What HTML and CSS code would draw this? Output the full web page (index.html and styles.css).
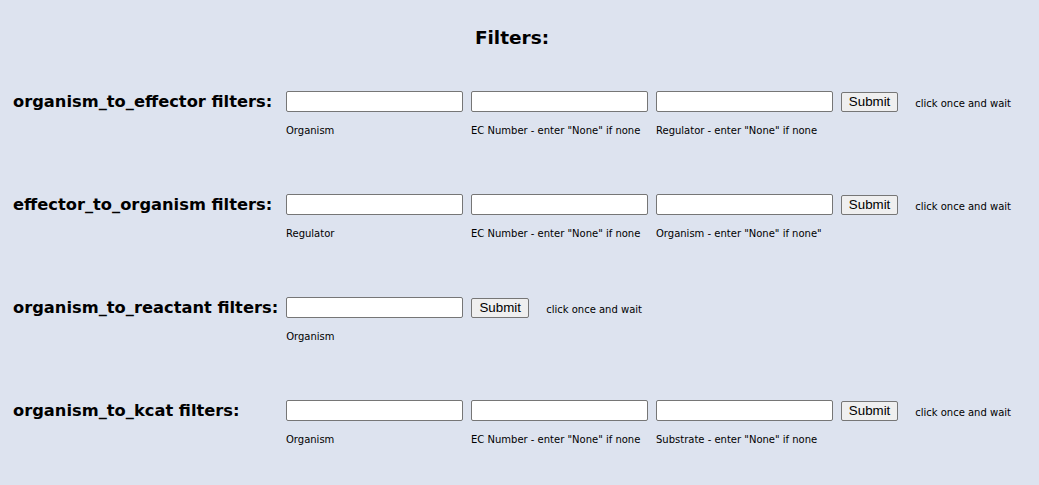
FILE: index.html
```html
<!DOCTYPE html>
<html>
<head>
<meta charset="utf-8">
<link rel="stylesheet" href="styles.css">
</head>
<body>
<div class="page">
  <h2 class="title">Filters:</h2>

  <form class="section">
    <h3 class="name">organism_to_effector filters:</h3>
    <label class="field"><input class="input" type="text"><span class="caption">Organism</span></label>
    <label class="field"><input class="input" type="text"><span class="caption">EC Number - enter "None" if none</span></label>
    <label class="field"><input class="input" type="text"><span class="caption">Regulator - enter "None" if none</span></label>
    <button class="submit" type="button">Submit</button>
    <span class="hint">click once and wait</span>
  </form>

  <form class="section">
    <h3 class="name">effector_to_organism filters:</h3>
    <label class="field"><input class="input" type="text"><span class="caption">Regulator</span></label>
    <label class="field"><input class="input" type="text"><span class="caption">EC Number - enter "None" if none</span></label>
    <label class="field"><input class="input" type="text"><span class="caption">Organism - enter "None" if none"</span></label>
    <button class="submit" type="button">Submit</button>
    <span class="hint">click once and wait</span>
  </form>

  <form class="section">
    <h3 class="name">organism_to_reactant filters:</h3>
    <label class="field"><input class="input" type="text"><span class="caption">Organism</span></label>
    <button class="submit" type="button">Submit</button>
    <span class="hint">click once and wait</span>
  </form>

  <form class="section">
    <h3 class="name">organism_to_kcat filters:</h3>
    <label class="field"><input class="input" type="text"><span class="caption">Organism</span></label>
    <label class="field"><input class="input" type="text"><span class="caption">EC Number - enter "None" if none</span></label>
    <label class="field"><input class="input" type="text"><span class="caption">Substrate - enter "None" if none</span></label>
    <button class="submit" type="button">Submit</button>
    <span class="hint">click once and wait</span>
  </form>
</div>
</body>
</html>
```

FILE: styles.css
```css
html, body {
  margin: 0;
  padding: 0;
}
body {
  background: #dde3ef;
  font-family: "DejaVu Sans", Verdana, sans-serif;
  color: #000;
}
.page {
  width: 998px;
  padding: 0 0 0 13px;
}
.title {
  margin: 27px 0 0 0;
  font-size: 18.5px;
  line-height: 22px;
  font-weight: bold;
  text-align: center;
}
.section {
  display: flex;
  align-items: flex-start;
  column-gap: 8px;
  margin: 0;
  height: 45px;
}
.title + .section {
  margin-top: 42px;
}
.section + .section {
  margin-top: 58px;
}
.name {
  flex: 0 0 265px;
  margin: 0;
  font-size: 16.3px;
  line-height: 22px;
  font-weight: bold;
  white-space: nowrap;
}
.field {
  display: flex;
  flex-direction: column;
  row-gap: 12px;
  width: 177px;
}
.input {
  width: 177px;
  height: 21px;
  box-sizing: border-box;
  margin: 0;
  padding: 1px 2px;
  border: 1px solid #767676;
  border-radius: 2px;
  background: #fff;
  font: 13.33px "Liberation Sans", Arial, sans-serif;
}
.caption {
  font-size: 10px;
  line-height: 13px;
  white-space: nowrap;
}
.submit {
  margin: 1px 0 0 0;
  width: 58px;
  height: 20px;
  padding: 0;
  border: 1px solid #767676;
  border-radius: 2px;
  background: #efefef;
  font: 13.33px/18px "Liberation Sans", Arial, sans-serif;
  color: #000;
}
.hint {
  margin: 6px 0 0 9px;
  font-size: 10px;
  line-height: 13px;
  white-space: nowrap;
}
```
